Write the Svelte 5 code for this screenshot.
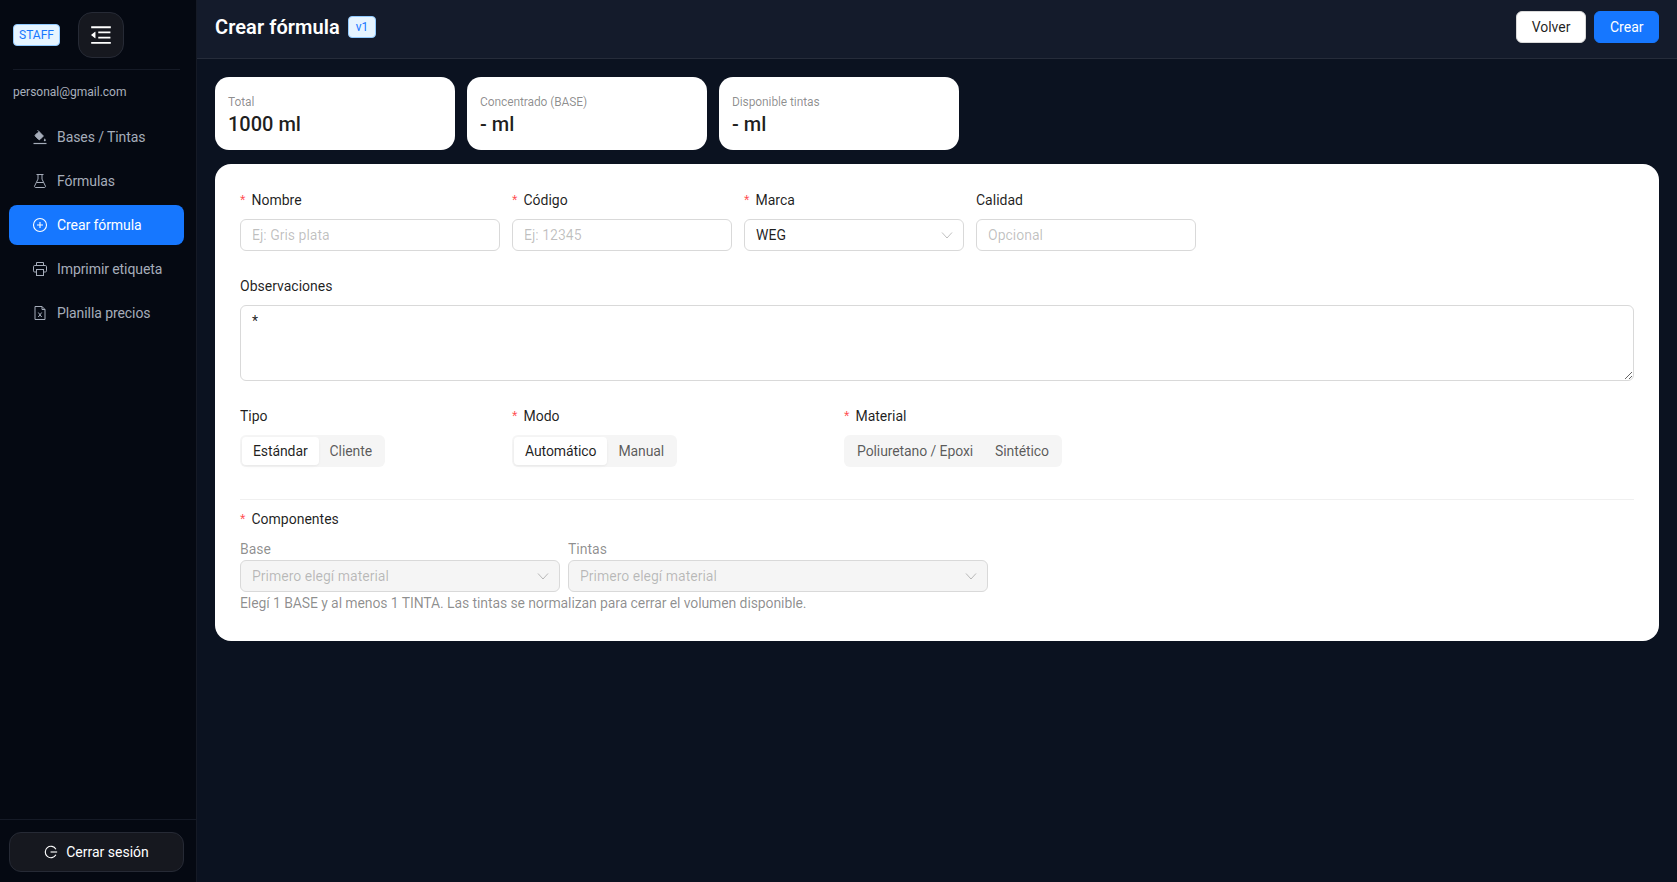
<script>
  const menu = [
    { label: 'Bases / Tintas', icon: 'bases' },
    { label: 'Fórmulas', icon: 'flask' },
    { label: 'Crear fórmula', icon: 'plus', active: true },
    { label: 'Imprimir etiqueta', icon: 'printer' },
    { label: 'Planilla precios', icon: 'excel' }
  ];
  const stats = [
    { label: 'Total', value: '1000 ml' },
    { label: 'Concentrado (BASE)', value: '- ml' },
    { label: 'Disponible tintas', value: '- ml' }
  ];
</script>

{#snippet chevron()}
  <svg class="chevron" viewBox="0 0 12 12" width="12" height="12">
    <path d="M1 3.5l5 5.5 5-5.5" fill="none" stroke="currentColor" stroke-width="1" />
  </svg>
{/snippet}

{#snippet segmented(options, active)}
  <div class="segmented">
    {#each options as opt, i}
      <span class="seg-item" class:selected={i === active}>{opt}</span>
    {/each}
  </div>
{/snippet}

<div class="layout">
  <aside class="sidebar">
    <div class="brand">
      <span class="staff">STAFF</span>
      <button class="toggle" aria-label="Plegar menú">
        <svg viewBox="64 64 896 896" width="22" height="22" fill="currentColor">
          <path d="M408 442h480c4.4 0 8-3.6 8-8v-56c0-4.4-3.6-8-8-8H408c-4.4 0-8 3.6-8 8v56c0 4.4 3.6 8 8 8zm-8 204c0 4.4 3.6 8 8 8h480c4.4 0 8-3.6 8-8v-56c0-4.4-3.6-8-8-8H408c-4.4 0-8 3.6-8 8v56zm504-486H120c-4.4 0-8 3.6-8 8v56c0 4.4 3.6 8 8 8h784c4.4 0 8-3.6 8-8v-56c0-4.4-3.6-8-8-8zm0 632H120c-4.4 0-8 3.6-8 8v56c0 4.4 3.6 8 8 8h784c4.4 0 8-3.6 8-8v-56c0-4.4-3.6-8-8-8zM115.4 518.9L271.7 642c5.8 4.6 14.4.5 14.4-6.9V388.9c0-7.4-8.5-11.5-14.4-6.9L115.4 505.1a8.74 8.74 0 000 13.8z" />
        </svg>
      </button>
    </div>
    <div class="email">personal@gmail.com</div>
    <nav class="menu">
      {#each menu as item}
        <a class="menu-item" class:active={item.active} href="#top">
          <svg class="menu-icon" viewBox="0 0 16 16" width="16" height="16" fill="none" stroke="currentColor" stroke-width="1">
            {#if item.icon === 'bases'}
              <path d="M1.5 14.5h13" stroke-width="1.2" />
              <path d="M7.2 2.8l4.2 4.2-3.4 3.4a1 1 0 0 1-1.4 0L3.4 7.2a1 1 0 0 1 0-1.4z" fill="currentColor" />
              <path d="M5.6 1.2l2 2" />
              <path d="M12.8 9.2c.6.9 1 1.5 1 2a1 1 0 0 1-2 0c0-.5.4-1.1 1-2z" fill="currentColor" stroke="none" />
            {:else if item.icon === 'flask'}
              <path d="M4.5 1.5h7M6 1.5v4.6L2.6 13a1 1 0 0 0 .9 1.5h9a1 1 0 0 0 .9-1.5L10 6.1V1.5" />
              <path d="M4.6 9.5h6.8" />
            {:else if item.icon === 'plus'}
              <circle cx="8" cy="8" r="6.5" stroke-width="1.1" />
              <path d="M8 5v6M5 8h6" stroke-width="1.1" />
            {:else if item.icon === 'printer'}
              <path d="M4.5 4.5v-3h7v3" />
              <rect x="1.5" y="4.5" width="13" height="6.5" rx="1.2" />
              <rect x="4.5" y="8.5" width="7" height="6" fill="#050912" />
            {:else}
              <path d="M3 1.5h7l3 3v10H3z" />
              <path d="M10 1.5v3h3" />
              <path d="M6.3 7.5l3.4 4.5M9.7 7.5L6.3 12" />
            {/if}
          </svg>
          <span>{item.label}</span>
        </a>
      {/each}
    </nav>
    <div class="sidebar-foot">
      <button class="logout">
        <svg viewBox="0 0 16 16" width="14" height="14" fill="none" stroke="currentColor" stroke-width="1.3">
          <path d="M13.6 11.2A6.5 6.5 0 1 1 13.6 4.8" />
          <path d="M7.5 8h7.5" />
        </svg>
        Cerrar sesión
      </button>
    </div>
  </aside>

  <div class="main">
    <header class="topbar">
      <div class="title-wrap">
        <h1>Crear fórmula</h1>
        <span class="version">v1</span>
      </div>
      <div class="actions">
        <button class="btn">Volver</button>
        <button class="btn primary">Crear</button>
      </div>
    </header>

    <div class="content">
      <div class="stats">
        {#each stats as s}
          <div class="stat">
            <div class="stat-label">{s.label}</div>
            <div class="stat-value">{s.value}</div>
          </div>
        {/each}
      </div>

      <section class="card">
        <div class="row-fields">
          <div class="field f-name">
            <label class="req" for="nombre">Nombre</label>
            <input id="nombre" placeholder="Ej: Gris plata" />
          </div>
          <div class="field f-small">
            <label class="req" for="codigo">Código</label>
            <input id="codigo" placeholder="Ej: 12345" />
          </div>
          <div class="field f-small">
            <span class="lab req">Marca</span>
            <div class="select">WEG {@render chevron()}</div>
          </div>
          <div class="field f-small">
            <label for="calidad">Calidad</label>
            <input id="calidad" placeholder="Opcional" />
          </div>
        </div>

        <div class="field obs">
          <label for="obs">Observaciones</label>
          <textarea id="obs">*</textarea>
        </div>

        <div class="row-seg">
          <div class="field col-tipo">
            <span class="lab">Tipo</span>
            {@render segmented(['Estándar', 'Cliente'], 0)}
          </div>
          <div class="field col-modo">
            <span class="lab req">Modo</span>
            {@render segmented(['Automático', 'Manual'], 0)}
          </div>
          <div class="field">
            <span class="lab req">Material</span>
            {@render segmented(['Poliuretano / Epoxi', 'Sintético'], -1)}
          </div>
        </div>

        <hr />

        <div class="lab req comp-title">Componentes</div>
        <div class="row-comp">
          <div class="comp-base">
            <div class="sub">Base</div>
            <div class="select disabled">Primero elegí material {@render chevron()}</div>
          </div>
          <div class="comp-tintas">
            <div class="sub">Tintas</div>
            <div class="select disabled">Primero elegí material {@render chevron()}</div>
          </div>
        </div>
        <p class="hint">Elegí 1 BASE y al menos 1 TINTA. Las tintas se normalizan para cerrar el volumen disponible.</p>
      </section>
    </div>
  </div>
</div>

<style>
  :global(body) {
    margin: 0;
    background: #0b1220;
    font-family: Roboto, "Open Sans", sans-serif;
  }

  .layout {
    display: flex;
    height: 882px;
    overflow: hidden;
  }

  .sidebar {
    width: 196px;
    flex-shrink: 0;
    background: #050912;
    border-right: 1px solid #151a26;
    display: flex;
    flex-direction: column;
  }

  .brand {
    display: flex;
    align-items: center;
    gap: 18px;
    height: 69px;
    margin: 0 16px 0 13px;
    border-bottom: 1px solid #151a26;
  }

  .staff {
    box-sizing: border-box;
    width: 47px;
    height: 22px;
    line-height: 20px;
    text-align: center;
    font-size: 12px;
    color: #1677ff;
    background: #e6f4ff;
    border: 1px solid #91caff;
    border-radius: 4px;
  }

  .toggle {
    width: 46px;
    height: 46px;
    display: flex;
    align-items: center;
    justify-content: center;
    padding: 0;
    color: #fff;
    background: #16181f;
    border: 1px solid #262a35;
    border-radius: 14px;
  }

  .email {
    margin: 14px 0 0 13px;
    font-size: 12px;
    line-height: 17px;
    color: #a9b0bd;
  }

  .menu {
    display: flex;
    flex-direction: column;
    gap: 4px;
    padding: 16px 12px 0 9px;
  }

  .menu-item {
    height: 40px;
    display: flex;
    align-items: center;
    gap: 9px;
    padding-left: 23px;
    border-radius: 8px;
    font-size: 14px;
    letter-spacing: -0.08px;
    color: #a6adba;
    text-decoration: none;
  }

  .menu-item.active {
    background: #1677ff;
    color: #fff;
  }

  .sidebar-foot {
    margin-top: auto;
    padding: 12px 12px 10px 9px;
    border-top: 1px solid #151a26;
  }

  .logout {
    width: 100%;
    height: 40px;
    display: flex;
    align-items: center;
    justify-content: center;
    gap: 8px;
    font: inherit;
    font-size: 14px;
    color: #fff;
    background: #16181f;
    border: 1px solid #262a35;
    border-radius: 12px;
  }

  .main {
    flex: 1;
    min-width: 0;
  }

  .topbar {
    box-sizing: content-box;
    height: 54px;
    display: flex;
    align-items: center;
    justify-content: space-between;
    padding: 0 18px 4px;
    background: #141b2b;
    border-bottom: 1px solid #262c3a;
  }

  .title-wrap {
    display: flex;
    align-items: center;
    gap: 8px;
  }

  h1 {
    margin: 0;
    font-size: 20px;
    letter-spacing: 0.08px;
    font-weight: 600;
    color: #fff;
  }

  .version {
    box-sizing: border-box;
    width: 28px;
    height: 22px;
    line-height: 20px;
    text-align: center;
    font-size: 12px;
    color: #1677ff;
    background: #e6f4ff;
    border: 1px solid #91caff;
    border-radius: 4px;
  }

  .actions {
    display: flex;
    gap: 8px;
  }

  .btn {
    height: 32px;
    padding: 0 15px;
    font: inherit;
    font-size: 14px;
    color: rgba(0, 0, 0, 0.88);
    background: #fff;
    border: 1px solid #d9d9d9;
    border-radius: 6px;
  }

  .btn.primary {
    padding: 0 14.5px;
    color: #fff;
    background: #1677ff;
    border-color: #1677ff;
  }

  .content {
    padding: 18px 18px 0;
  }

  .stats {
    display: flex;
    gap: 12px;
    margin-bottom: 14px;
  }

  .stat {
    width: 240px;
    height: 73px;
    box-sizing: border-box;
    padding: 17px 13px 0;
    background: #fff;
    border-radius: 14px;
  }

  .stat-label {
    font-size: 12px;
    line-height: 16px;
    letter-spacing: -0.1px;
    color: rgba(0, 0, 0, 0.45);
  }

  .stat-value {
    font-size: 20px;
    line-height: 28px;
    font-weight: 500;
    color: rgba(0, 0, 0, 0.88);
  }

  .card {
    background: #fff;
    border-radius: 16px;
    height: 477px;
    box-sizing: border-box;
    padding: 25px;
  }

  .row-fields {
    display: flex;
    gap: 12px;
  }

  .field {
    display: flex;
    flex-direction: column;
  }

  .f-name {
    width: 260px;
  }

  .f-small {
    width: 220px;
  }

  label, .lab {
    display: block;
    font-size: 14px;
    line-height: 22px;
    margin-bottom: 8px;
    color: rgba(0, 0, 0, 0.88);
  }

  .req::before {
    content: "*";
    color: #ff4d4f;
    margin-right: 6px;
    font-family: "Liberation Sans", sans-serif;
  }

  input, .select {
    box-sizing: border-box;
    height: 32px;
    padding: 0 11px;
    font: inherit;
    font-size: 14px;
    color: rgba(0, 0, 0, 0.88);
    background: #fff;
    border: 1px solid #d9d9d9;
    border-radius: 6px;
    outline: none;
  }

  input::placeholder {
    color: rgba(0, 0, 0, 0.25);
  }

  .select {
    display: flex;
    align-items: center;
    justify-content: space-between;
    padding-right: 10px;
  }

  .chevron {
    color: rgba(0, 0, 0, 0.25);
  }

  .select.disabled {
    color: rgba(0, 0, 0, 0.25);
    background: rgba(0, 0, 0, 0.04);
  }

  .obs {
    margin-top: 24px;
  }

  textarea {
    box-sizing: border-box;
    display: block;
    width: 100%;
    height: 76px;
    padding: 4px 11px;
    font: inherit;
    font-size: 14px;
    line-height: 22px;
    color: rgba(0, 0, 0, 0.88);
    background: #fff;
    border: 1px solid #d9d9d9;
    border-radius: 6px;
    outline: none;
  }

  .row-seg {
    display: flex;
    margin-top: 24px;
  }

  .col-tipo {
    width: 272px;
  }

  .col-modo {
    width: 332px;
  }

  .segmented {
    display: inline-flex;
    align-self: flex-start;
    padding: 2px;
    background: #f5f5f5;
    border-radius: 6px;
  }

  .seg-item {
    height: 28px;
    line-height: 28px;
    padding: 0 11px;
    font-size: 14px;
    letter-spacing: -0.1px;
    color: rgba(0, 0, 0, 0.65);
    border-radius: 4px;
  }

  .seg-item.selected {
    color: rgba(0, 0, 0, 0.88);
    background: #fff;
    box-shadow: 0 1px 2px rgba(0, 0, 0, 0.03), 0 1px 6px -1px rgba(0, 0, 0, 0.02), 0 2px 4px rgba(0, 0, 0, 0.02);
  }

  hr {
    margin: 32px 0 0;
    border: 0;
    border-top: 1px solid #f0f0f0;
  }

  .comp-title {
    margin: 8px 0 8px;
  }

  .row-comp {
    display: flex;
    gap: 8px;
  }

  .comp-base {
    width: 320px;
  }

  .comp-tintas {
    width: 420px;
  }

  .sub {
    font-size: 14px;
    line-height: 22px;
    color: rgba(0, 0, 0, 0.45);
  }

  .hint {
    margin: 0;
    font-size: 14px;
    line-height: 22px;
    letter-spacing: -0.1px;
    color: rgba(0, 0, 0, 0.45);
  }
</style>
